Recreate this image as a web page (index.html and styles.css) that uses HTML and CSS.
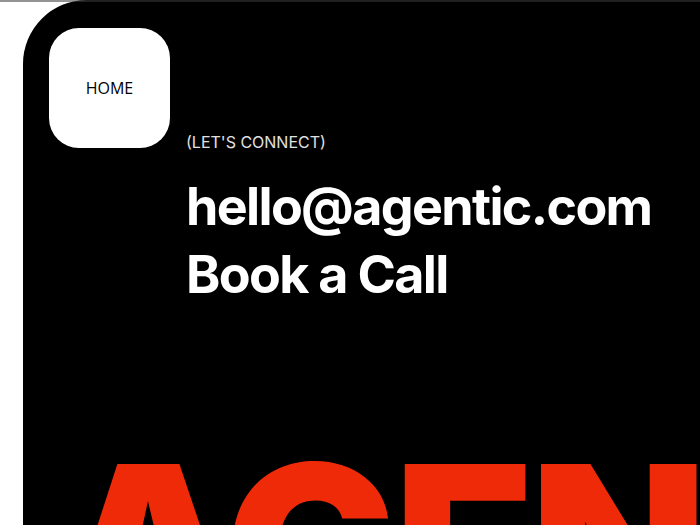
FILE: index.html
```html
<!DOCTYPE html>
<html lang="en">
<head>
<meta charset="utf-8">
<title>Agentic — Contact</title>
<link rel="stylesheet" href="styles.css">
</head>
<body>
<div class="topline"></div>
<main class="panel">
  <div class="layout">
    <a class="home" href="#">HOME</a>
    <section class="contact">
      <p class="eyebrow">(LET'S CONNECT)</p>
      <h1 class="links">
        <a href="#">hello@agentic.com</a>
        <a href="#">Book a Call</a>
      </h1>
    </section>
  </div>
  <div class="brand">AGENTIC</div>
</main>
</body>
</html>
```
FILE: styles.css
```css
html, body {
  margin: 0;
  padding: 0;
  height: 100%;
  overflow: hidden;
}
body {
  background: #ffffff;
  font-family: "Inter", "Liberation Sans", sans-serif;
  position: relative;
}
.topline {
  position: absolute;
  left: 0;
  top: 0;
  right: 0;
  height: 2px;
  background: rgba(60, 60, 60, 0.55);
  z-index: 5;
}
.panel {
  margin-left: 23px;
  min-height: 100vh;
  background: #000000;
  border-top-left-radius: 64px;
  padding: 28px 0 0 26px;
  box-sizing: border-box;
  overflow: hidden;
}
.layout {
  display: grid;
  grid-template-columns: 121px 1fr;
  column-gap: 16px;
  align-items: start;
}
.home {
  display: flex;
  align-items: center;
  justify-content: center;
  width: 121px;
  height: 120px;
  background: #ffffff;
  border-radius: 30px;
  color: #000000;
  text-decoration: none;
  font-family: "Open Sans", "Noto Sans", sans-serif;
  font-size: 16px;
}
.contact {
  padding-top: 104px;
}
.eyebrow {
  margin: 0;
  font-size: 16px;
  line-height: 20px;
  font-weight: 400;
  color: #e0e0e0;
}
.links {
  margin: 21px 0 0;
  display: flex;
  flex-direction: column;
  font-size: 52px;
  line-height: 68px;
  font-weight: 700;
  letter-spacing: -0.032em;
}
.links a {
  color: #ffffff;
  text-decoration: none;
}
.brand {
  margin-top: 123px;
  margin-left: 9px;
  font-size: 230px;
  line-height: 1;
  font-weight: 900;
  color: #ef2a08;
  white-space: nowrap;
  letter-spacing: -0.02em;
}
```
